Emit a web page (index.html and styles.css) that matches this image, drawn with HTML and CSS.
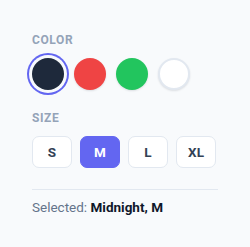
FILE: index.html
```html
<!DOCTYPE html>
<html>
<head>
<meta charset="utf-8">
<link rel="stylesheet" href="styles.css">
</head>
<body>
<div class="picker">
  <div class="section">
    <div class="label">Color</div>
    <div class="swatches">
      <button class="swatch swatch-midnight is-selected" aria-label="Midnight"></button>
      <button class="swatch swatch-red" aria-label="Red"></button>
      <button class="swatch swatch-green" aria-label="Green"></button>
      <button class="swatch swatch-white" aria-label="White"></button>
    </div>
  </div>
  <div class="section">
    <div class="label">Size</div>
    <div class="sizes">
      <button class="size">S</button>
      <button class="size is-active">M</button>
      <button class="size">L</button>
      <button class="size">XL</button>
    </div>
  </div>
  <div class="summary">Selected: <strong>Midnight, M</strong></div>
</div>
</body>
</html>
```
FILE: styles.css
```css
* { box-sizing: border-box; }
html, body { margin: 0; padding: 0; background: #f8fafc; }
body { font-family: Roboto, "Noto Sans", sans-serif; }
.picker {
  padding: 32px 32px 0 32px;
  width: 250px;
}
.section { margin-bottom: 20px; }
.label {
  font-size: 12px;
  line-height: 16px;
  font-weight: 700;
  letter-spacing: 0.05em;
  text-transform: uppercase;
  color: #94a3b8;
  margin-bottom: 10px;
}
.swatches { display: flex; gap: 10px; }
.swatch {
  width: 32px; height: 32px;
  border-radius: 50%;
  border: none;
  padding: 0;
  box-shadow: 0 1px 2px rgba(15, 23, 42, 0.12);
}
.swatch-midnight { background: #1e293b; }
.swatch-red { background: #ef4444; }
.swatch-green { background: #22c55e; }
.swatch-white { background: #ffffff; border: 2px solid #e2e8f0; }
.swatch.is-selected {
  box-shadow: 0 0 0 3px #f8fafc, 0 0 0 5px #6366f1;
}
.sizes { display: flex; gap: 8px; }
.size {
  min-width: 40px;
  height: 32px;
  padding: 0 11px;
  border: 1px solid #e2e8f0;
  border-radius: 7px;
  background: #ffffff;
  font-family: inherit;
  font-size: 13.5px;
  font-weight: 700;
  color: #334155;
}
.size.is-active {
  background: #6366f1;
  border-color: #6366f1;
  color: #ffffff;
}
.summary {
  margin-top: 21px;
  border-top: 1px solid #e2e8f0;
  padding-top: 7px;
  font-size: 13.5px;
  line-height: 20px;
  color: #64748b;
}
.summary strong { color: #0f172a; font-weight: 700; }
```
